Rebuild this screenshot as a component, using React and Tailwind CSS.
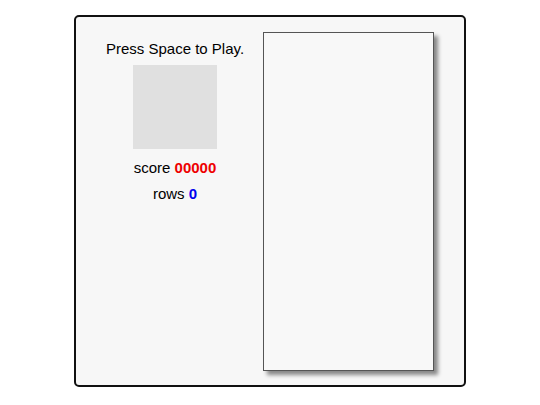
// Tetris-style board: info panel on the left, playfield on the right
export default function App() {
    return (
        <div className="w-[540px] h-[405px] bg-white pt-[15px]"
            style={{ fontFamily: '"Liberation Sans", Arial, sans-serif' }}>
            <div className="mx-auto w-[392px] h-[372px] border-2 border-[#111] rounded-[5px] bg-[#f7f7f7] flex">

                {/* ─── Info panel ─────────────────────────────── */}
                <div className="w-[187px] pl-[11px] flex flex-col items-center text-[15px] text-black">
                    <p className="mt-[23px] leading-[17px]">Press Space to Play.</p>
                    <div className="mt-[8px] w-[84px] h-[84px] bg-[#e0e0e0]" />
                    <p className="mt-[10px] leading-[17px]">
                        score <span className="font-bold text-[#ee0000]">00000</span>
                    </p>
                    <p className="mt-[9px] leading-[17px]">
                        rows <span className="font-bold text-[#0000ee]">0</span>
                    </p>
                </div>

                {/* ─── Playfield ──────────────────────────────── */}
                <div className="mt-[15px] w-[171px] h-[339px] border border-[#555] bg-[#f8f8f8] shadow-[4px_4px_4px_rgba(0,0,0,0.45)]" />
            </div>
        </div>
    );
}
